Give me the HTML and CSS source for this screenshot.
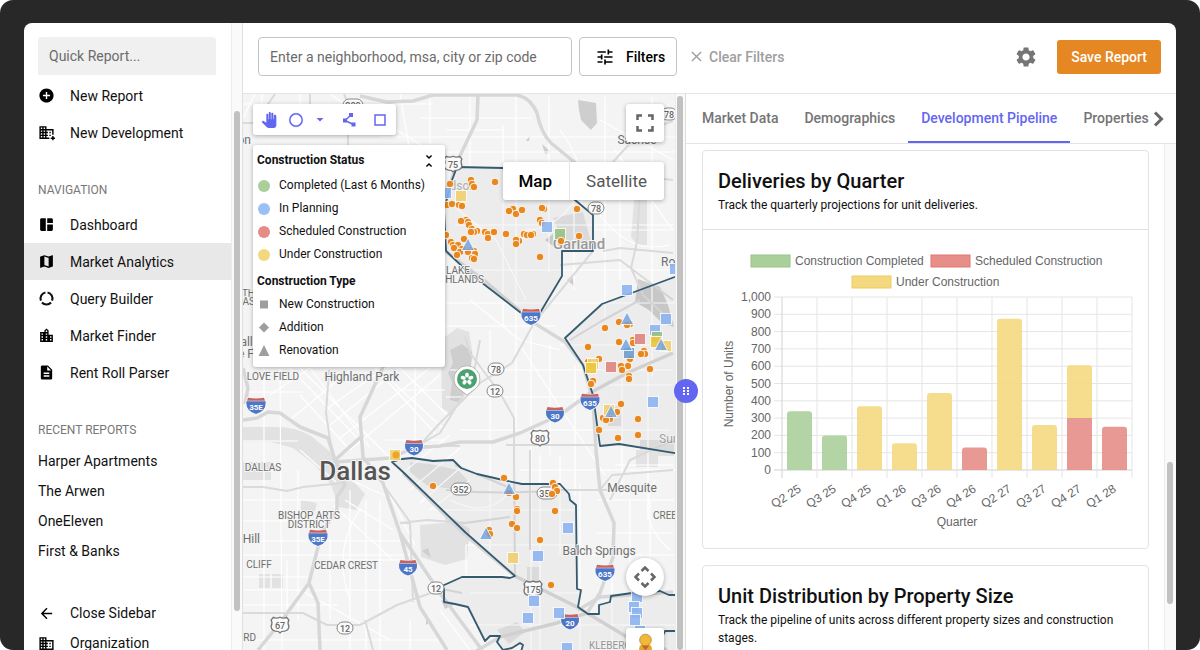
FILE: index.html
```
<!DOCTYPE html>
<html lang="en">
  <head>
    <meta charset="UTF-8" />
    <meta name="viewport" content="width=device-width, initial-scale=1.0" />
    <title>Market Analytics</title>
    <link rel="stylesheet" href="styles.css">
  </head>
  <body>
    <div class="frame">
      <div class="screen">
        <!-- Sidebar -->
        <aside class="sidebar">
          <div class="sidebar-content">
            <input class="quick-report" type="text" placeholder="Quick Report..." aria-label="Quick Report" />
            <nav class="nav-group">
              <a class="nav-item" href="#"><svg class="icon" viewBox="0 0 24 24"><path d="M12 2C6.48 2 2 6.48 2 12s4.48 10 10 10 10-4.48 10-10S17.52 2 12 2zm5 11h-4v4h-2v-4H7v-2h4V7h2v4h4v2z"/></svg>New Report</a>
              <a class="nav-item" href="#"><svg class="icon" viewBox="0 0 24 24"><path d="M12 7V3H2v18h14v-2h-4v-2h2v-2h-2v-2h2v-2h-2V9h8v6h2V7H12zM6 19H4v-2h2V19zM6 15H4v-2h2V15zM6 11H4V9h2V11zM6 7H4V5h2V7zM10 19H8v-2h2V19zM10 15H8v-2h2V15zM10 11H8V9h2V11zM10 7H8V5h2V7zM24 19v2h-2v2h-2v-2h-2v-2h2v-2h2v2H24zM18 11h-2v2h2V11zM18 15h-2v2h2V15z"/></svg>New Development</a>
            </nav>

            <h2 class="nav-heading">NAVIGATION</h2>
            <nav class="nav-group">
              <a class="nav-item" href="#"><svg class="icon" viewBox="0 0 24 24"><path d="M11 21H5c-1.1 0-2-.9-2-2V5c0-1.1.9-2 2-2h6v18zm2 0h6c1.1 0 2-.9 2-2v-7h-8v9zm8-11V5c0-1.1-.9-2-2-2h-6v7h8z"/></svg>Dashboard</a>
              <a class="nav-item active" href="#"><svg class="icon" viewBox="0 0 24 24"><path d="M20.5 3l-.16.03L15 5.1 9 3 3.36 4.9c-.21.07-.36.25-.36.48V20.5c0 .28.22.5.5.5l.16-.03L9 18.9l6 2.1 5.64-1.9c.21-.07.36-.25.36-.48V3.5c0-.28-.22-.5-.5-.5zM15 19l-6-2.11V5l6 2.11V19z"/></svg>Market Analytics</a>
              <a class="nav-item" href="#"><svg class="icon" viewBox="0 0 24 24"><path class="ring" d="M13.5 3.6A8.5 8.5 0 0 1 19.9 15M18.4 17.6A8.5 8.5 0 0 1 5.6 17.6M4.1 15A8.5 8.5 0 0 1 10.5 3.6"/></svg>Query Builder</a>
              <a class="nav-item" href="#"><svg class="icon" viewBox="0 0 24 24"><path d="M15 11V5l-3-3-3 3v2H3v14h18V11h-6zm-8 8H5v-2h2v2zm0-4H5v-2h2v2zm0-4H5V9h2v2zm6 8h-2v-2h2v2zm0-4h-2v-2h2v2zm0-4h-2V9h2v2zm0-4h-2V5h2v2zm6 12h-2v-2h2v2zm0-4h-2v-2h2v2z"/></svg>Market Finder</a>
              <a class="nav-item" href="#"><svg class="icon" viewBox="0 0 24 24"><path d="M14 2H6c-1.1 0-1.99.9-1.99 2L4 20c0 1.1.89 2 1.99 2H18c1.1 0 2-.9 2-2V8l-6-6zm2 16H8v-2h8v2zm0-4H8v-2h8v2zm-3-5V3.5L18.5 9H13z"/></svg>Rent Roll Parser</a>
            </nav>

            <h2 class="nav-heading">RECENT REPORTS</h2>
            <nav class="nav-group compact">
              <a class="nav-item" href="#">Harper Apartments</a>
              <a class="nav-item" href="#">The Arwen</a>
              <a class="nav-item" href="#">OneEleven</a>
              <a class="nav-item" href="#">First &amp; Banks</a>
            </nav>

            <nav class="nav-group compact nav-footer">
              <a class="nav-item" href="#"><svg class="icon" viewBox="0 0 24 24"><path d="M20 11H7.83l5.59-5.59L12 4l-8 8 8 8 1.41-1.41L7.83 13H20v-2z"/></svg>Close Sidebar</a>
              <a class="nav-item" href="#"><svg class="icon" viewBox="0 0 24 24"><path d="M12 7V3H2v18h20V7H12zM6 19H4v-2h2v2zm0-4H4v-2h2v2zm0-4H4V9h2v2zm0-4H4V5h2v2zm4 12H8v-2h2v2zm0-4H8v-2h2v2zm0-4H8V9h2v2zm0-4H8V5h2v2zm10 12h-8v-2h2v-2h-2v-2h2v-2h-2V9h8v10zm-2-8h-2v2h2v-2zm0 4h-2v2h2v-2z"/></svg>Organization</a>
            </nav>
          </div>
          <div class="scroll-track sidebar-track"><div class="scroll-thumb"></div></div>
        </aside>

        <main class="main">
          <!-- Search bar -->
          <header class="topbar">
            <input class="search" type="text" placeholder="Enter a neighborhood, msa, city or zip code" aria-label="Search location" />
            <button class="filters-button"><svg class="icon" viewBox="0 0 24 24"><path d="M3 17v2h6v-2H3zM3 5v2h10V5H3zm10 16v-2h8v-2h-8v-2h-2v6h2zM7 9v2H3v2h4v2h2V9H7zm14 4v-2H11v2h10zm-6-4h2V7h4V5h-4V3h-2v6z"/></svg>Filters</button>
            <button class="clear-button"><svg viewBox="0 0 12 12"><path d="M1 1l10 10M11 1L1 11"/></svg>Clear Filters</button>
            <button class="settings-button" aria-label="Settings"><svg viewBox="0 0 24 24"><path d="M19.14 12.94c.04-.3.06-.61.06-.94 0-.32-.02-.64-.07-.94l2.03-1.58c.18-.14.23-.41.12-.61l-1.92-3.32c-.12-.22-.37-.29-.59-.22l-2.39.96c-.5-.38-1.03-.7-1.62-.94l-.36-2.54c-.04-.24-.24-.41-.48-.41h-3.84c-.24 0-.43.17-.47.41l-.36 2.54c-.59.24-1.13.57-1.62.94l-2.39-.96c-.22-.08-.47 0-.59.22L2.74 8.87c-.12.21-.08.47.12.61l2.03 1.58c-.05.3-.09.63-.09.94s.02.64.07.94l-2.03 1.58c-.18.14-.23.41-.12.61l1.92 3.32c.12.22.37.29.59.22l2.39-.96c.5.38 1.03.7 1.62.94l.36 2.54c.05.24.24.41.48.41h3.84c.24 0 .44-.17.47-.41l.36-2.54c.59-.24 1.13-.56 1.62-.94l2.39.96c.22.08.47 0 .59-.22l1.92-3.32c.12-.22.07-.47-.12-.61l-2.01-1.58zM12 15.6c-1.98 0-3.6-1.62-3.6-3.6s1.62-3.6 3.6-3.6 3.6 1.62 3.6 3.6-1.62 3.6-3.6 3.6z"/></svg></button>
            <button class="save-button">Save Report</button>
          </header>

          <div class="workspace">
            <!-- Map -->
            <section class="map">
              <svg class="map-canvas" viewBox="243 94 432 556" preserveAspectRatio="xMinYMin slice">
                <defs>
                  <symbol id="interstate" viewBox="0 0 20 17" overflow="visible">
                    <path d="M2 0Q10 2 18 0L20 5Q20 14 10 17Q0 14 0 5z" fill="#f5f5f5"/>
                    <path d="M1 4h18Q20 13 10 16Q0 13 1 4z" fill="#4c76c7"/>
                    <path d="M2.500 .6Q10 2 17.500 .6L18.500 3.500H1.500z" fill="#c9625f"/>
                  </symbol>
                  <symbol id="us-route" viewBox="0 0 18 16" overflow="visible">
                    <path d="M3 1Q6 2.500 9 1Q12 2.500 15 1L17 3.500Q15.500 6 17 9Q17 13 13 13.500Q10 13.500 9 15Q8 13.500 5 13.500Q1 13 1 9Q2.500 6 1 3.500z" fill="#fafafa" stroke="#777" stroke-width="1.200"/>
                  </symbol>
                </defs>
                <rect x="243" y="94" width="432" height="556" fill="#f4f4f4"/>

                <!-- Parks and built-up areas -->
                <g fill="#e2e2e2">
                  <path d="M243 427h32q22 0 36 9l22 18 12 18 20 22-9 16-17-3-8-22-16-20-22-17-22-6h-28z"/>
                  <path d="M410 462l20 2 28 6 12 13-16 6-26-3-18-14z"/>
                  <path d="M420 525l25-2v-10l25 16-3 30-22 6-24-8z"/>
                  <path d="M259 574h11v14h-11zM272 574h11v14h-11zM301 500l16 3-2 8-14 2zM640 440h34v16h-34zM636 450h22v17h-22zM527 567h12v17h-12zM608 406h14v20h-14z"/>
                  <path d="M441 340l16-12 12 4 4 24-10 40-12 18-9-6zM553 218l30-6 8 30-26 5zM635 190h12v55h-10l-6-8z"/>
                  <path d="M497 630l20-8 8 10-16 12zM243 462h28v18h-28z"/>
                </g>
                <g fill="#cecece">
                  <path d="M450 350l12-6 10 8-1 14-6 10 4 10-11 16-8-2 2-18-4-9 5-10z"/>
                  <path d="M578 100l18 3 1 20-6 7-10-10-2-10zM638 279l22 8 8 18 6 22-12-4-13-13-14-8z"/>
                  <path d="M526 141l4-6-1 6zM545 240l8-6v12zM567 280l5-5 3 12zM441 600l14 4-10 5zM422 551l6-3 3 10zM426 616l5 5-5 4zM542 144l9 8-6 2z"/>
                </g>

                <!-- Local streets -->
                <g class="streets">
                  <path d="M243 104h190M420 118h112M380 137h295M447 152h228M503 125v200M455 225h218M447 270h115M470 97v70M516 97v330M549 97v175M574 160v130M605 97v223M652 97v280M620 150v130M593 230h80M562 270h111M446 303h229M446 326h110M560 345h110M446 397h140M450 370h223M490 330v220M531 326v330M460 430h210M550 345v110M575 365v130M602 385h70M622 375v120M648 350v170M615 465h58M520 470h155M580 485v165M597 500h77M596 533h77M540 455v195M560 455v100M435 510h140M466 545h110M466 545v31M466 576h49M590 555h84M650 500v95M630 500v100M470 593h110M470 625h205M612 560v90"/>
                  <path d="M264 368v282M280 368l2 282M298 470v150M350 490v160M366 500v150M380 500v150M243 392h60M243 441h55M243 500h95M243 521h90M243 541h170M243 555h140M243 590h160M243 605h95M330 540v80M343 560h60M287 560v50M243 577h65M380 555h30M243 640h200M380 570v80M300 590l90 50M410 620v30"/>
                  <path d="M290 368l75 78M300 368l90 90M310 368l60 80M325 410l60-42M330 425l70-57M340 438l90-70M350 450l90-75M300 395l50 55M375 368l60 65M385 375l60 55M400 368l50 50M415 368v85M395 390h50M385 440h60M290 420l60-50M270 395l40-27M400 475l50-40M410 490l50-42M420 503l40-35M430 510l40-30M333 505l60 55M345 500l48 30M350 480l45 20M360 510q-28 40-10 90M385 485l30 60M300 450l36 32"/>
                  <path d="M446 200l50 40 30 60M520 345l45 70 40 60M470 300l50 40 40 10M600 120l73 40M560 130q30 40 20 80M450 500q40 20 60-10M440 610l30 40M600 215q30 40 70 30M446 130h56M575 200q-20 30-50 30M655 480q-20 40 15 70M615 150l58 80"/>
                  <path d="M243 118l12-24M262 94v20M300 94v20M330 94l20 14M400 94l12 70M430 94v50M380 120l66 40"/>
                </g>

                <!-- Highways -->
                <g class="highways minor">
                  <path d="M243 487h20l24 4 16-4 40-4M243 613h60l24 12h33l37-20 45-16 20 4M329 370l-3 43 4 27 5 20M407 452l33-19 13-21 19-30 8-42M465 337l5 16 30 40 14 25v42l1 116M400 523l27-3 38 3 45-6M446 490q60 5 115 0h50M420 446h40M596 445h-90M603 251l17-3 53 5M613 162l9-10 18-19 33-12M593 215v36l-59 72-22 40-32 20-40 40-20 22M640 190l-3 52-6 26 12 27 30 28M600 490l12-15 61-5M530 450v100M673 180l-40-4-60-12M344 94l4 9v60M310 94v20M243 123h12M255 123l20-29M365 620l8 30M640 300l-40 22-30 18M560 265l60-5 53 40M610 500l20-40 43-20M455 465l60 25M385 487l25 35 3 80"/>
                </g>
                <g class="highways">
                  <path d="M360 96l27 6 26-1 20-6h84q14 3 20 18 4 20 14 30l22 18 44 38M478 95l-1 25-19 40-20 60-30 90-25 57-23 50 3 40 20 26 17 50 20 74 27 43M400 533l40 60 42 57M243 420l14-2 11-6 12 1 20 14 28 11 7 22 10 25-8 12v13l-14 20-5 17-9 36-29 40-22 27M309 583l9 20 2 47M243 368l5 20-3 16M335 460l28-25"/>
                  <path d="M335 462l28-2 27-2 24-10 26-2 20-4h33l27-9 40-18 30-22 37-20 46-20M446 252l40 30 48 41 31 19 18 23 10 35 3 50 4 40 14 33-1 34-13 36-13 20-30 10-57 14-27 16M578 610l22-13 73-5"/>
                  <path d="M403 473l60 60 52 43 62 31 50 30 40 13"/>
                </g>

                <!-- Market boundaries -->
                <g class="boundaries">
                  <path d="M446 251l22 21 66 51 28-47v-25h31v-36l-18-15-35-30-37-2-46-1-5 13-8 30z"/>
                  <path d="M680 275l-78 29-37 34 18 27 10 30 7 51 19-2 61 10z"/>
                  <path d="M392 462l10-3 10-1 21 3 20-1 8 8 16 6 26 6 19 4h38l9 10 1 6 6 5 1 84 4 1-3 17 10 7h11v-9l11-3 1-6 21-3 28-2 9 4h12v60H520l3-10-3-2-8 5-9 2-6-8 3-6h-10l-5 5-17-34-13-3-11-2v-13l-2-3 20-9h40l8 1 5-2-50-44-62-60z"/>
                  <path d="M663 635l2-4h15"/>
                </g>

                <!-- Place names -->
                <g class="labels">
                  <text class="suburb" x="579" y="249">Garland</text>
                  <text x="637" y="144">Sachse</text>
                  <text class="end" x="476" y="190" opacity=".5">Richardson</text>
                  <text x="362" y="381">Highland Park</text>
                  <text x="632" y="492">Mesquite</text>
                  <text x="599" y="555">Balch Springs</text>
                  <text class="start" x="661" y="266">Rowlett</text>
                  <text class="start" x="659" y="443" opacity=".6">Sunnyvale</text>
                  <text class="end" x="251" y="144">Addison</text>
                  <text class="end" x="260" y="543">Oak Hill</text>
                  <text x="249" y="346">Dallas</text>
                  <text x="246" y="358">Love Field</text>
                  <text class="city" x="355" y="480">Dallas</text>
                </g>
                <g class="labels area">
                  <text x="273" y="380">LOVE FIELD</text>
                  <text x="263" y="471">DALLAS</text>
                  <text x="309" y="519">BISHOP ARTS</text>
                  <text x="309" y="528">DISTRICT</text>
                  <text x="346" y="569">CEDAR CREST</text>
                  <text x="259" y="568">CLIFF</text>
                  <text class="end" x="470" y="274">LAKE</text>
                  <text class="end" x="484" y="283">HIGHLANDS</text>
                  <text class="end" x="255" y="297">NORTH</text>
                  <text class="end" x="255" y="305">DALLAS</text>
                  <text class="end" x="256" y="641">REDBIRD</text>
                  <text class="start" x="653" y="519">CREEK</text>
                  <text x="610" y="649" opacity=".7">KLEBERG</text>
                </g>

                <g id="routes"></g>
                <g id="markers"></g>

                <!-- Saved place pin -->
                <g>
                  <path d="M467 395l-8-6a13 13 0 1 1 16 0z" fill="#fff" stroke="#aaa" stroke-width=".8"/>
                  <circle cx="467" cy="379" r="10" fill="#4da06f"/>
                  <g fill="#fff"><ellipse cx="467" cy="375" rx="1.900" ry="2.600"/><ellipse cx="467" cy="375" rx="1.900" ry="2.600" transform="rotate(72 467 379)"/><ellipse cx="467" cy="375" rx="1.900" ry="2.600" transform="rotate(144 467 379)"/><ellipse cx="467" cy="375" rx="1.900" ry="2.600" transform="rotate(216 467 379)"/><ellipse cx="467" cy="375" rx="1.900" ry="2.600" transform="rotate(288 467 379)"/></g>
                </g>
              </svg>

              <div class="draw-tools">
                <button aria-label="Pan"><svg viewBox="0 0 24 24"><path d="M23 5.500V20c0 2.200-1.800 4-4 4h-7.300c-1.080 0-2.100-.43-2.850-1.190L1 14.830s1.260-1.230 1.300-1.250c.22-.19.49-.29.79-.29.22 0 .42.06.6.16.04.01 4.310 2.460 4.310 2.460V4c0-.83.67-1.500 1.500-1.500S11 3.170 11 4v7h.7V1.500c0-.83.67-1.500 1.500-1.500s1.500.67 1.500 1.500V11h.8V2.500c0-.83.67-1.500 1.500-1.500s1.500.67 1.500 1.500V11h.7V5.500c0-.83.67-1.500 1.500-1.500s1.800.67 1.800 1.500z"/></svg></button>
                <button aria-label="Circle"><svg viewBox="0 0 16 16"><circle cx="8" cy="8" r="6.200" class="outline"/></svg></button>
                <button aria-label="Circle options"><svg viewBox="0 0 16 16"><path d="M4.500 6h7L8 9.500z"/></svg></button>
                <button aria-label="Polyline"><svg viewBox="0 0 16 16"><path d="M8 1h4v4H8zM2 6.500h4v4H2zM10.500 10.500h4v4h-4z"/><path class="outline" d="M10 3L4 8.500l8.500 4"/></svg></button>
                <button aria-label="Rectangle"><svg viewBox="0 0 16 16"><path d="M3 3h10v10H3z" class="outline"/></svg></button>
              </div>

              <div class="map-legend">
                <div class="legend-title">Construction Status
                  <button aria-label="Collapse"><svg viewBox="0 0 24 24"><path d="M7.410 19.590L8.830 21 12 17.830 15.170 21l1.410-1.410L12 15l-4.590 4.590zm9.180-15.180L15.170 3 12 6.170 8.830 3 7.410 4.410 12 9l4.590-4.590z"/></svg></button>
                </div>
                <ul>
                  <li><i class="swatch completed"></i>Completed (Last 6 Months)</li>
                  <li><i class="swatch planning"></i>In Planning</li>
                  <li><i class="swatch scheduled"></i>Scheduled Construction</li>
                  <li><i class="swatch under"></i>Under Construction</li>
                </ul>
                <div class="legend-title">Construction Type</div>
                <ul>
                  <li><i class="swatch square"></i>New Construction</li>
                  <li><i class="swatch diamond"></i>Addition</li>
                  <li><i class="swatch triangle"></i>Renovation</li>
                </ul>
              </div>

              <button class="map-control fullscreen" aria-label="Fullscreen"><svg viewBox="0 0 18 18"><path d="M1.500 6V1.500H6M12 1.500h4.500V6M16.500 12v4.500H12M6 16.500H1.500V12"/></svg></button>
              <div class="map-type">
                <button class="selected">Map</button>
                <button>Satellite</button>
              </div>
              <button class="map-control camera" aria-label="Camera controls"><svg viewBox="0 0 22 22"><path d="M7.500 5L11 1.500 14.500 5M7.500 17l3.500 3.500 3.500-3.500M5 7.500L1.500 11 5 14.500M17 7.500l3.500 3.500-3.500 3.500"/></svg></button>
              <button class="map-control street" aria-label="Street View"><svg viewBox="0 0 18 24"><path d="M3.500 14q0-5 5.500-5t5.500 5l1 8h-13z" fill="#e3a72c"/><circle cx="9" cy="6" r="5" fill="#f0b93a" stroke="#b9862c" stroke-width=".7"/><path d="M6 11h6l-3 4z" fill="#c9622b"/></svg></button>
            </section>

            <div class="scroll-track map-track">
              <div class="scroll-thumb"></div>
              <button class="split-handle" aria-label="Resize panels"><svg viewBox="0 0 8 10"><path d="M1 1h2v2H1zM5 1h2v2H5zM1 4h2v2H1zM5 4h2v2H5zM1 7h2v2H1zM5 7h2v2H5z"/></svg></button>
            </div>

            <!-- Reports -->
            <section class="panel">
              <nav class="tabs">
                <a href="#">Market Data</a>
                <a href="#">Demographics</a>
                <a class="active" href="#">Development Pipeline</a>
                <a href="#">Properties</a>
                <button class="tabs-next" aria-label="More tabs"><svg viewBox="0 0 12 16"><path d="M2 1.500L8.500 8 2 14.500"/></svg></button>
              </nav>
              <div class="panel-body">
                <div class="cards">
                  <article class="card">
                    <header class="card-header">
                      <h3>Deliveries by Quarter</h3>
                      <p>Track the quarterly projections for unit deliveries.</p>
                    </header>
                    <svg class="chart" viewBox="703 230 445 318">
                      <g id="chartLegend"></g>
                      <g id="chartGrid"></g>
                      <g id="chartBars"></g>
                      <text x="957" y="526" text-anchor="middle">Quarter</text>
                      <text transform="translate(733 384) rotate(-90)" text-anchor="middle">Number of Units</text>
                    </svg>
                  </article>
                  <article class="card">
                    <header class="card-header">
                      <h3>Unit Distribution by Property Size</h3>
                      <p>Track the pipeline of units across different property sizes and construction stages.</p>
                    </header>
                  </article>
                </div>
                <div class="scroll-track panel-track"><div class="scroll-thumb"></div></div>
              </div>
            </section>
          </div>
        </main>
      </div>
    </div>
    <script src="app.js"></script>
  </body>
</html>
```

FILE: styles.css
```
* {
  margin: 0;
  padding: 0;
  box-sizing: border-box;
}

body {
  font-family: Roboto, "Liberation Sans", sans-serif;
  font-size: 14px;
  color: #111;
  background: white;
  height: 100vh;
  overflow: hidden;
}

button {
  font: inherit;
  border: none;
  background: none;
  cursor: pointer;
}

a {
  color: inherit;
  text-decoration: none;
}

ul {
  list-style: none;
}

svg {
  display: block;
}

.frame {
  height: 100vh;
  padding: 23px 24px 0;
  background: #282828;
  border-radius: 13px;
  overflow: hidden;
}

.screen {
  display: flex;
  height: 100%;
  background: white;
  border-radius: 8px 8px 0 0;
  overflow: hidden;
}

.icon {
  width: 17px;
  height: 17px;
  flex: none;
}

/* Scrollbars */
.scroll-track {
  flex: none;
  width: 12px;
  padding: 0 2px;
  background: #fafafa;
  border-left: 1px solid #ececec;
}

.scroll-thumb {
  width: 6px;
  border-radius: 3px;
  background: #c1c1c1;
}

/* Sidebar */
.sidebar {
  display: flex;
  flex: none;
  width: 218px;
}

.sidebar-content {
  flex: 1;
  padding-top: 14px;
}

.quick-report {
  display: block;
  width: 178px;
  height: 38px;
  margin: 0 14px 2px;
  padding: 0 11px;
  border: none;
  border-radius: 4px 4px 0 0;
  background: #f0f0f0;
  font: inherit;
}

.quick-report::placeholder,
.search::placeholder {
  color: #6b6b6b;
  opacity: 1;
}

.nav-item {
  display: flex;
  align-items: center;
  gap: 15px;
  height: 37px;
  padding: 0 14px;
}

.nav-item.active {
  background: #e8e8e8;
}

.nav-item .ring {
  fill: none;
  stroke: #111;
  stroke-width: 3;
}

.compact .nav-item {
  height: 30px;
}

.nav-heading {
  margin: 29px 14px 6px;
  font-size: 12px;
  font-weight: 400;
  line-height: 20px;
  color: #777;
}

.nav-footer {
  margin-top: 32px;
}

.sidebar-track {
  width: 11px;
  padding-top: 88px;
}

.sidebar-track .scroll-thumb {
  height: 500px;
}

/* Top bar */
.main {
  flex: 1;
  min-width: 0;
  display: flex;
  flex-direction: column;
  border-left: 1px solid #e0e0e0;
}

.topbar {
  display: flex;
  align-items: center;
  flex: none;
  height: 71px;
  padding: 0 15px 3px 15px;
  border-bottom: 1px solid #e4e4e4;
}

.search {
  width: 314px;
  height: 39px;
  margin-right: 7px;
  padding: 0 11px;
  border: 1px solid #c4c4c4;
  border-radius: 4px;
  font: inherit;
}

.filters-button {
  display: flex;
  align-items: center;
  gap: 11px;
  width: 98px;
  height: 39px;
  padding: 0 15px;
  border: 1px solid #c4c4c4;
  border-radius: 4px;
  font-weight: 500;
}

.filters-button .icon {
  width: 20px;
  height: 20px;
}

.clear-button {
  display: flex;
  align-items: center;
  gap: 7px;
  margin: 0 auto 0 14px;
  color: #9e9e9e;
  font-weight: 500;
}

.clear-button svg {
  width: 11px;
  height: 11px;
  fill: none;
  stroke: #9e9e9e;
  stroke-width: 1.500;
}

.settings-button svg {
  width: 24px;
  height: 24px;
  margin-right: 19px;
  fill: #757575;
}

.save-button {
  height: 34px;
  padding: 0 14px;
  border-radius: 3px;
  background: #e58722;
  color: white;
  font-weight: 500;
}

.workspace {
  flex: 1;
  min-height: 0;
  display: flex;
}

/* Map */
.map {
  position: relative;
  flex: 432;
  min-width: 0;
  overflow: hidden;
}

.map-canvas {
  width: 100%;
  height: 100%;
}

.streets,
.highways {
  fill: none;
  stroke: white;
  stroke-width: 1.200;
}

.highways {
  stroke: #d7d7d7;
  stroke-width: 3.500;
  stroke-linejoin: round;
}

.highways.minor {
  stroke-width: 2;
  stroke: #dadada;
}

.boundaries {
  fill: rgba(0, 0, 0, 0.03);
  stroke: #345a70;
  stroke-width: 1.800;
  stroke-linejoin: round;
}

.labels text {
  font-size: 12px;
  fill: #6e6e6e;
  text-anchor: middle;
  paint-order: stroke;
  stroke: #f5f5f5;
  stroke-width: 2px;
}

.labels .start {
  text-anchor: start;
}

.labels .end {
  text-anchor: end;
}

.labels .suburb {
  font-size: 15px;
  font-weight: 500;
  fill: #999;
}

.labels .city {
  font-size: 26px;
  font-weight: 500;
  fill: #555;
}

.labels.area text {
  font-size: 10px;
}

.route-label {
  font-size: 9px;
  font-weight: 500;
  fill: #666;
  text-anchor: middle;
}

.route-label.interstate {
  font-size: 8px;
  font-weight: 700;
  fill: white;
}

.draw-tools,
.map-legend,
.map-control,
.map-type {
  position: absolute;
  background: white;
  border-radius: 3px;
  box-shadow: 0 1px 4px rgba(0, 0, 0, 0.3);
}

.draw-tools {
  top: 10px;
  left: 10px;
  display: flex;
  align-items: center;
  gap: 11px;
  width: 143px;
  height: 31px;
  padding: 0 8px;
}

.draw-tools svg {
  width: 16px;
  height: 16px;
  fill: #6366f1;
}

.draw-tools button:nth-child(3) {
  margin: 0 2px 0 -3px;
}

.draw-tools button:nth-child(4) {
  margin-right: 4px;
}

.draw-tools .outline {
  fill: none;
  stroke: #6366f1;
  stroke-width: 1.500;
}

.map-legend {
  top: 51px;
  left: 10px;
  width: 192px;
  padding: 4px 4px 5px;
  line-height: 23px;
  font-size: 12px;
}

.legend-title {
  display: flex;
  justify-content: space-between;
  align-items: center;
  font-weight: 700;
}

ul + .legend-title {
  margin-top: 4px;
}

.legend-title button {
  padding: 0 3px;
}

.legend-title svg {
  width: 18px;
  height: 16px;
}

.map-legend li {
  display: flex;
  align-items: center;
  gap: 9px;
  padding-left: 1px;
}

.map-legend ul:first-of-type {
  padding-top: 2px;
}

.swatch {
  width: 12px;
  height: 12px;
  border-radius: 50%;
}

.completed {
  background: #aacf99;
}

.planning {
  background: #9bc0f8;
}

.scheduled {
  background: #e58c85;
}

.under {
  background: #f4d87f;
}

.square,
.diamond,
.triangle {
  background: #9e9e9e;
  border-radius: 0;
}

.square {
  clip-path: inset(2px);
}

.diamond {
  clip-path: polygon(50% 8%, 92% 50%, 50% 92%, 8% 50%);
}

.triangle {
  clip-path: polygon(50% 5%, 95% 95%, 5% 95%);
}

.map-control {
  right: 11px;
  width: 38px;
  height: 38px;
  display: flex;
  align-items: center;
  justify-content: center;
}

.fullscreen,
.camera {
  stroke: #666;
  stroke-width: 2.500;
  fill: none;
}

.fullscreen {
  top: 10px;
}

.fullscreen svg {
  width: 18px;
  height: 18px;
}

.camera {
  top: 464px;
  border-radius: 50%;
}

.camera svg {
  width: 22px;
  height: 22px;
}

.street {
  top: 534px;
}

.street svg {
  width: 21px;
  height: 28px;
}

.map-type {
  top: 68px;
  right: 11px;
  display: flex;
  height: 38px;
}

.map-type button {
  padding: 0 17px 0 16px;
  font-size: 17px;
  color: #565656;
}

.map-type .selected {
  font-weight: 500;
  color: #000;
  border-right: 1px solid #e6e6e6;
}

.map-track {
  position: relative;
  width: 11px;
  padding: 2px 1px 0;
  border-right: 1px solid #ddd;
}

.map-track .scroll-thumb {
  height: 100%;
}

.split-handle {
  position: absolute;
  z-index: 1;
  top: 285px;
  left: -2px;
  width: 24px;
  height: 24px;
  display: flex;
  align-items: center;
  justify-content: center;
  border-radius: 50%;
  background: #6366f1;
}

.split-handle svg {
  width: 8px;
  height: 10px;
  fill: white;
}

/* Report panel */
.panel {
  flex: 490;
  min-width: 0;
  display: flex;
  flex-direction: column;
}

.tabs {
  display: flex;
  flex: none;
  height: 50px;
  padding-left: 3px;
  border-bottom: 1px solid #e4e4e4;
  color: #757575;
  font-weight: 500;
}

.tabs a {
  padding: 0 13px;
  line-height: 48px;
  white-space: nowrap;
}

.tabs .active {
  color: #6366f1;
  border-bottom: 2px solid #6366f1;
}

.tabs a:nth-child(4) {
  padding-right: 4px;
}

.tabs-next svg {
  width: 12px;
  height: 16px;
  fill: none;
  stroke: #666;
  stroke-width: 3;
}

.panel-body {
  flex: 1;
  min-height: 0;
  display: flex;
}

.cards {
  flex: 1;
  min-width: 0;
  display: flex;
  flex-direction: column;
  gap: 16px;
  padding: 6px 15px 0 16px;
  overflow: hidden;
}

.card {
  flex: none;
  border: 1px solid #e3e3e3;
  border-radius: 4px;
}

.card-header {
  padding: 15px;
  border-bottom: 1px solid #e0e0e0;
}

.card h3 {
  font-size: 20px;
  font-weight: 500;
  line-height: 30px;
}

.card p {
  font-size: 12px;
  line-height: 18px;
}

.chart {
  width: 100%;
}

.chart text {
  font-family: "Liberation Sans", Arial, sans-serif;
  font-size: 12px;
  fill: #666;
}

.panel-track {
  padding-top: 318px;
}

.panel-track .scroll-thumb {
  height: 142px;
}
```

FILE: app.js
```
const SVG_NS = "http://www.w3.org/2000/svg";

function draw(parent, tag, attrs, text) {
  const el = document.createElementNS(SVG_NS, tag);
  for (const key in attrs) el.setAttribute(key, attrs[key]);
  if (text) el.textContent = text;
  parent.appendChild(el);
  return el;
}

// Route shields: [kind, label, x, y]
const routes = [
  ["interstate", "635", 531, 317], ["interstate", "635", 590, 402], ["interstate", "30", 555, 415],
  ["interstate", "30", 414, 448], ["interstate", "35E", 256, 406], ["interstate", "35E", 318, 538],
  ["interstate", "45", 408, 568], ["interstate", "635", 605, 573], ["interstate", "20", 570, 622],
  ["us-route", "75", 453, 164], ["us-route", "80", 540, 438], ["us-route", "67", 280, 625],
  ["us-route", "175", 533, 589],
  ["state", "78", 596, 208], ["state", "78", 496, 369], ["state", "12", 495, 391],
  ["state", "12", 436, 588], ["state", "12", 345, 628], ["state", "78", 669, 114],
  ["state", "352", 461, 489], ["state", "352", 547, 493], ["state", "289", 353, 105],
];

const routeLayer = document.getElementById("routes");
routes.forEach(([kind, label, x, y]) => {
  const wide = label.length > 2 ? 4 : 0;
  if (kind === "state") {
    draw(routeLayer, "rect", {
      x: x - 8 - wide / 2, y: y - 6, width: 16 + wide, height: 12, rx: 6,
      fill: "#fafafa", stroke: "#888",
    });
  } else {
    const width = 20 + wide / 2;
    draw(routeLayer, "use", { href: "#" + kind, x: x - width / 2, y: y - 9, width: width, height: 18 });
  }
  draw(routeLayer, "text", { class: "route-label " + kind, x: x, y: y + 4 }, label);
});

// Project markers
const colors = { blue: "#8db4ef", yellow: "#efcf6d", red: "#e0837e", green: "#97c083", gold: "#ecc53c", steel: "#6f9ccc" };

const dots = [
  [450, 184], [471, 180], [472, 184], [474, 187], [495, 182], [447, 205], [452, 204], [459, 205], [462, 206],
  [466, 220], [468, 222], [461, 221], [469, 225], [472, 229], [477, 231], [474, 232], [471, 232], [485, 232],
  [488, 234], [488, 238], [494, 232], [506, 234], [513, 209], [509, 211], [516, 214], [522, 210], [544, 209],
  [542, 208], [540, 220], [542, 223], [577, 209], [579, 236], [540, 257], [524, 234], [527, 235], [533, 234],
  [531, 235], [519, 241], [516, 240], [516, 244], [446, 235], [464, 239], [451, 242], [453, 245], [458, 245],
  [454, 248], [462, 249], [460, 252], [457, 255], [472, 250], [474, 251], [468, 252], [475, 254], [472, 258],
  [474, 259], [619, 322], [630, 324], [627, 325], [605, 328], [619, 342], [633, 340], [633, 343], [588, 347],
  [599, 359], [588, 362], [644, 351], [645, 354], [641, 354], [630, 359], [628, 366], [621, 366], [622, 370],
  [650, 369], [629, 376], [629, 379], [593, 381], [591, 384], [621, 404], [617, 412], [610, 419], [603, 418],
  [606, 420], [638, 419], [638, 435], [618, 438], [599, 430], [504, 478], [509, 493], [516, 497], [517, 509],
  [517, 511], [512, 524], [517, 528], [489, 530], [490, 534], [540, 540], [551, 585], [555, 511], [553, 483],
  [555, 487], [557, 491], [552, 494], [433, 486],
];

const squares = [
  ["blue", 446, 193], ["yellow", 461, 196], ["blue", 547, 227], ["green", 560, 234], ["blue", 675, 269],
  ["blue", 627, 290], ["blue", 666, 319], ["blue", 655, 330], ["steel", 629, 353], ["blue", 653, 402],
  ["red", 640, 339], ["red", 611, 367], ["green", 657, 337], ["gold", 656, 342], ["yellow", 666, 346],
  ["yellow", 593, 364], ["gold", 591, 368], ["yellow", 609, 410], ["yellow", 513, 558], ["yellow", 395, 455],
  ["blue", 568, 528], ["blue", 538, 556], ["blue", 534, 601], ["blue", 528, 618], ["blue", 559, 613],
  ["blue", 567, 648], ["blue", 637, 597], ["blue", 634, 607], ["blue", 637, 613], ["blue", 635, 620],
  ["blue", 640, 631],
];

const triangles = [[468, 244], [627, 318], [626, 344], [661, 344], [611, 411], [509, 488], [486, 533]];

const markerLayer = document.getElementById("markers");
dots.forEach(([x, y]) => {
  draw(markerLayer, "circle", { cx: x, cy: y, r: 3.800, fill: "#e8871e", stroke: "#fff", "stroke-width": 0.900 });
});
squares.forEach(([color, x, y]) => {
  draw(markerLayer, "rect", {
    x: x - 5.500, y: y - 5.500, width: 11, height: 11, fill: colors[color],
    "fill-opacity": 0.900, stroke: "#fff", "stroke-width": 0.800,
  });
});
triangles.forEach(([x, y]) => {
  draw(markerLayer, "path", {
    d: `M${x} ${y - 6}l6.500 12.500h-13z`, fill: "#6f9fdd", "fill-opacity": 0.800, stroke: "#fff", "stroke-width": 0.800,
  });
});
draw(markerLayer, "circle", { cx: 561, cy: 241, r: 3.800, fill: "#e8871e", stroke: "#fff", "stroke-width": 0.900 });
draw(markerLayer, "circle", { cx: 396, cy: 455, r: 3.500, fill: "#eba52b" });

// Deliveries chart
const completed = { label: "Construction Completed", fill: "#abcf9b", stroke: "#98c486" };
const scheduled = { label: "Scheduled Construction", fill: "#e68e87", stroke: "#df7770" };
const under = { label: "Under Construction", fill: "#f4d981", stroke: "#efcb5c" };

const quarters = [
  ["Q2 25", [[completed, 340]]],
  ["Q3 25", [[completed, 200]]],
  ["Q4 25", [[under, 368]]],
  ["Q1 26", [[under, 155]]],
  ["Q3 26", [[under, 445]]],
  ["Q4 26", [[scheduled, 130]]],
  ["Q2 27", [[under, 875]]],
  ["Q3 27", [[under, 260]]],
  ["Q4 27", [[scheduled, 300], [under, 305]]],
  ["Q1 28", [[scheduled, 250]]],
];

const plot = { left: 782, right: 1132, top: 297, bottom: 470 };
const step = (plot.right - plot.left) / quarters.length;
const scale = (plot.bottom - plot.top) / 1000;

const legend = document.getElementById("chartLegend");
[[completed, 751, 255], [scheduled, 931, 255], [under, 852, 276]].forEach(([series, x, y]) => {
  draw(legend, "rect", { x: x, y: y, width: 39, height: 12, fill: series.fill, stroke: series.stroke });
  draw(legend, "text", { x: x + 44, y: y + 10 }, series.label);
});

const grid = document.getElementById("chartGrid");
for (let value = 0; value <= 1000; value += 100) {
  const y = plot.bottom - value * scale;
  draw(grid, "path", { d: `M${plot.left - 8} ${y}H${plot.right}`, stroke: value ? "#e5e5e5" : "#cfcfcf" });
  draw(grid, "text", { x: 771, y: y + 4, "text-anchor": "end" }, value.toLocaleString("en-US"));
}
for (let i = 0; i <= quarters.length; i++) {
  draw(grid, "path", { d: `M${plot.left + i * step} ${plot.top}V${plot.bottom + 8}`, stroke: i ? "#e5e5e5" : "#d2d2d2" });
}

const bars = document.getElementById("chartBars");
quarters.forEach(([name, parts], i) => {
  const x = plot.left + i * step + 5;
  let y = plot.bottom;
  parts.forEach(([series, value], n) => {
    const height = value * scale;
    y -= height;
    const r = n === parts.length - 1 ? 3 : 0;
    draw(bars, "path", {
      d: `M${x} ${y + height}V${y + r}q0 ${-r} ${r} ${-r}h${25 - 2 * r}q${r} 0 ${r} ${r}V${y + height}z`,
      fill: series.fill, "fill-opacity": 0.900,
    });
  });
  draw(bars, "text", { transform: `translate(${x + 15} 491) rotate(-32)`, "text-anchor": "end" }, name);
});
```
